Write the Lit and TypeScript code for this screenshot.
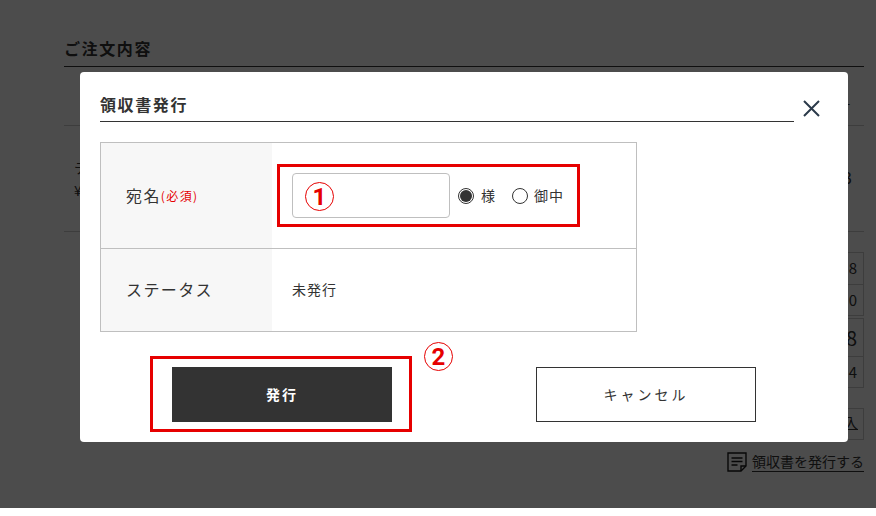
import { LitElement, html, css } from "lit";
import { customElement } from "lit/decorators.js";

@customElement("app-root")
export class AppRoot extends LitElement {
  static styles = css`
    :host {
      display: block;
      position: relative;
      width: 876px;
      height: 516px;
      overflow: hidden;
      background: #fff;
      color: #333;
      font-family: "Noto Sans CJK JP", "Noto Sans", sans-serif;
    }
    * { box-sizing: border-box; }

    .page { padding: 40px 12px 0 64px; height: 508px; display: flex; flex-direction: column; }
    .page h2 { margin: 0; height: 27px; font-size: 16px; line-height: 16px; font-weight: 700; letter-spacing: 1.6px; border-bottom: 1px solid #333; }
    .head-row { height: 59px; border-bottom: 1px solid #ccc; display: flex; justify-content: flex-end; align-items: center; font-size: 14px; padding-top: 18px; padding-right: 14px; }
    .item-row { height: 106px; border-bottom: 1px solid #ccc; display: flex; justify-content: space-between; align-items: center; padding: 0 12px 0 10px; font-size: 14px; line-height: 23px; }
    .qty { font-size: 16px; padding-bottom: 2px; }
    .totals { align-self: flex-end; width: 120px; margin-top: 20px; display: flex; flex-direction: column; gap: 2px; font-size: 15px; }
    .box { border: 1px solid #ccc; }
    .box div { display: flex; justify-content: flex-end; align-items: center; padding-right: 6px; }
    .box div + div { border-top: 1px solid #ccc; }
    .r31 { height: 31px; line-height: 29px; padding-bottom: 2px; }
    .big { height: 37px; font-size: 20px; line-height: 36px; }
    .buy { align-self: flex-end; width: 120px; margin-top: 20px; height: 32px; border: 1px solid #ccc; display: flex; justify-content: flex-end; align-items: center; padding: 0 5px 4px 0; font-size: 14px; text-decoration: underline; }
    .receipt { align-self: flex-end; margin-top: 12px; display: flex; align-items: center; gap: 5px; font-size: 14px; line-height: 20px; }
    .receipt span { border-bottom: 1px solid #333; line-height: 17px; height: 19px; }
    .receipt svg { display: block; }

    .scrim { position: absolute; left: 0; top: 0; width: 876px; height: 508px; background: rgba(0, 0, 0, 0.7); }

    .modal {
      position: absolute; left: 80px; top: 72px; width: 768px; height: 370px;
      background: #fff; border-radius: 4px; padding: 20px 20px 0;
    }
    .modal-head { display: flex; height: 30px; }
    .modal-head h3 {
      margin: 0; width: 694px; height: 30px; font-size: 16px; line-height: 25px; font-weight: 700;
      letter-spacing: 1.6px; border-bottom: 1px solid #333;
    }
    .close { width: 34px; display: flex; justify-content: center; padding-top: 8px; }
    .close svg { display: block; }

    .form { margin-top: 20px; width: 537px; border: 1px solid #bfbfbf; display: grid; grid-template-columns: 171px 1fr; grid-template-rows: 105px 83px; }
    .th { background: #f7f7f7; display: flex; align-items: center; padding: 0 0 2px 25px; font-size: 16px; letter-spacing: 1.4px; }
    .td { display: flex; align-items: center; padding: 0 0 2px 20px; font-size: 14px; letter-spacing: 1px; }
    .line { border-top: 1px solid #bfbfbf; }
    .req { font-size: 12px; color: #e60000; letter-spacing: 1.4px; margin: 2px 0 0 0; }
    .input { width: 158px; height: 45px; border: 1px solid #bfbfbf; border-radius: 4px; background: #fff; flex: none; margin-top: 2px; }
    .radio { width: 16px; height: 16px; border-radius: 50%; border: 1px solid #333; flex: none; display: flex; align-items: center; justify-content: center; margin-top: 2px; }
    .radio i { display: block; width: 12px; height: 12px; border-radius: 50%; background: #333; }
    .r1 { margin-left: 8px; }
    .l1 { margin-left: 7px; width: 31px; }
    .r2 { margin-left: 0; }
    .l2 { margin-left: 6px; }

    .actions { display: flex; gap: 144px; margin-top: 35px; padding-left: 72px; }
    .btn { width: 220px; height: 55px; display: flex; align-items: center; justify-content: center; font-size: 14px; letter-spacing: 2px; padding-bottom: 2px; }
    .primary { background: #333; color: #fff; font-weight: 700; }
    .secondary { background: #fff; border: 1px solid #333; color: #333; letter-spacing: 3px; }

    .mark { position: absolute; border: 3px solid #e60000; }
    .m1 { left: 197px; top: 92px; width: 303px; height: 63px; }
    .m2 { left: 70px; top: 284px; width: 262px; height: 76px; }
    .num {
      position: absolute; width: 29px; height: 29px; border: 1px solid #e60000; border-radius: 50%;
      color: #e60000; display: flex; align-items: center; justify-content: center;
      font-family: Roboto, sans-serif; font-size: 24px; font-weight: 700; line-height: 1;
    }
    .n1 { left: 225px; top: 110px; }
    .n2 { left: 344px; top: 270px; }
  `;

  render() {
    return html`
      <div class="page">
        <h2>ご注文内容</h2>
        <div class="head-row">小計</div>
        <div class="item-row">
          <div>テスト<br />¥1,000</div>
          <div class="qty">3</div>
        </div>
        <div class="totals">
          <div class="box"><div class="r31">8</div><div class="r31">0</div></div>
          <div class="box"><div class="big">8</div><div class="r31">4</div></div>
        </div>
        <div class="buy">入</div>
        <div class="receipt">
          <svg width="20" height="20" viewBox="0 0 20 20" fill="none" stroke="#1a1a1a" stroke-width="1.4">
            <path d="M1 1h18v13l-5 5H1z" />
            <path d="M14 19v-5h5" />
            <path d="M4.5 6h11M4.5 9.5h11M4.5 13h6" />
          </svg>
          <span>領収書を発行する</span>
        </div>
      </div>
      <div class="scrim"></div>
      <div class="modal">
        <div class="modal-head">
          <h3>領収書発行</h3>
          <div class="close">
            <svg width="17" height="17" viewBox="0 0 17 17" fill="none" stroke="#2b3a4a" stroke-width="2">
              <path d="M1 1l15 15M16 1L1 16" />
            </svg>
          </div>
        </div>
        <div class="form">
          <div class="th">宛名<span class="req">(必須)</span></div>
          <div class="td">
            <div class="input"></div>
            <div class="radio r1"><i></i></div>
            <span class="l1">様</span>
            <div class="radio r2"></div>
            <span class="l2">御中</span>
          </div>
          <div class="th line">ステータス</div>
          <div class="td line">未発行</div>
        </div>
        <div class="actions">
          <div class="btn primary">発行</div>
          <div class="btn secondary">キャンセル</div>
        </div>
        <div class="mark m1"></div>
        <div class="mark m2"></div>
        <div class="num n1">1</div>
        <div class="num n2">2</div>
      </div>
    `;
  }
}
